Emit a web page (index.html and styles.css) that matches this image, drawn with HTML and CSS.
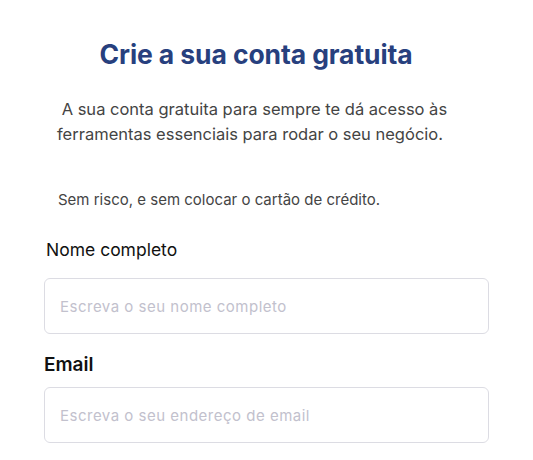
FILE: index.html
```html
<!DOCTYPE html>
<html lang="pt">
<head>
  <meta charset="UTF-8">
  <meta name="viewport" content="width=device-width, initial-scale=1.0">
  <title>Crie a sua conta</title>
  <link rel="stylesheet" href="styles.css">
</head>
<body>

  <div class="signup">
    <h1>Crie a sua conta gratuita</h1>

    <p class="intro">&nbsp;A sua conta gratuita para sempre te dá acesso às<br>ferramentas essenciais para rodar o seu negócio.</p>

    <p class="note">Sem risco, e sem colocar o cartão de crédito.</p>

    <!-- Form -->
    <form class="signup-form">
      <label class="field-label name-label" for="name">Nome completo</label>
      <input type="text" id="name" placeholder="Escreva o seu nome completo">

      <label class="field-label email-label" for="email">Email</label>
      <input type="email" id="email" placeholder="Escreva o seu endereço de email">
    </form>
  </div>

</body>
</html>
```

FILE: styles.css
```css
body {
  margin: 0;
  background-color: #fff;
  font-family: Inter, "Open Sans", Arial, sans-serif;
}

.signup {
  width: 445px;
  padding: 38px 0 0 44px;
}

.signup h1 {
  margin: 0 21px 0 0;
  text-align: center;
  font-size: 26.5px;
  font-weight: 700;
  color: #27407e;
  letter-spacing: -0.1px;
}

.intro {
  margin: 27px 0 0 13px;
  font-size: 16.5px;
  line-height: 25px;
  color: #444;
}

.note {
  margin: 43px 0 0 14px;
  font-size: 15px;
  color: #444;
}

.signup-form {
  display: flex;
  flex-direction: column;
}

.field-label {
  font-size: 17.5px;
  color: #111;
}

.name-label {
  margin: 30px 0 18px 2px;
}

.email-label {
  margin: 19px 0 11px 0;
  font-size: 19px;
  font-weight: 600;
}

.signup-form input {
  height: 56px;
  box-sizing: border-box;
  border: 1.5px solid #dcdce3;
  border-radius: 6px;
  padding: 0 15px;
  font-family: inherit;
  font-size: 15px;
  letter-spacing: 0.5px;
}

.signup-form input::placeholder {
  color: #c2c1cd;
}
```
